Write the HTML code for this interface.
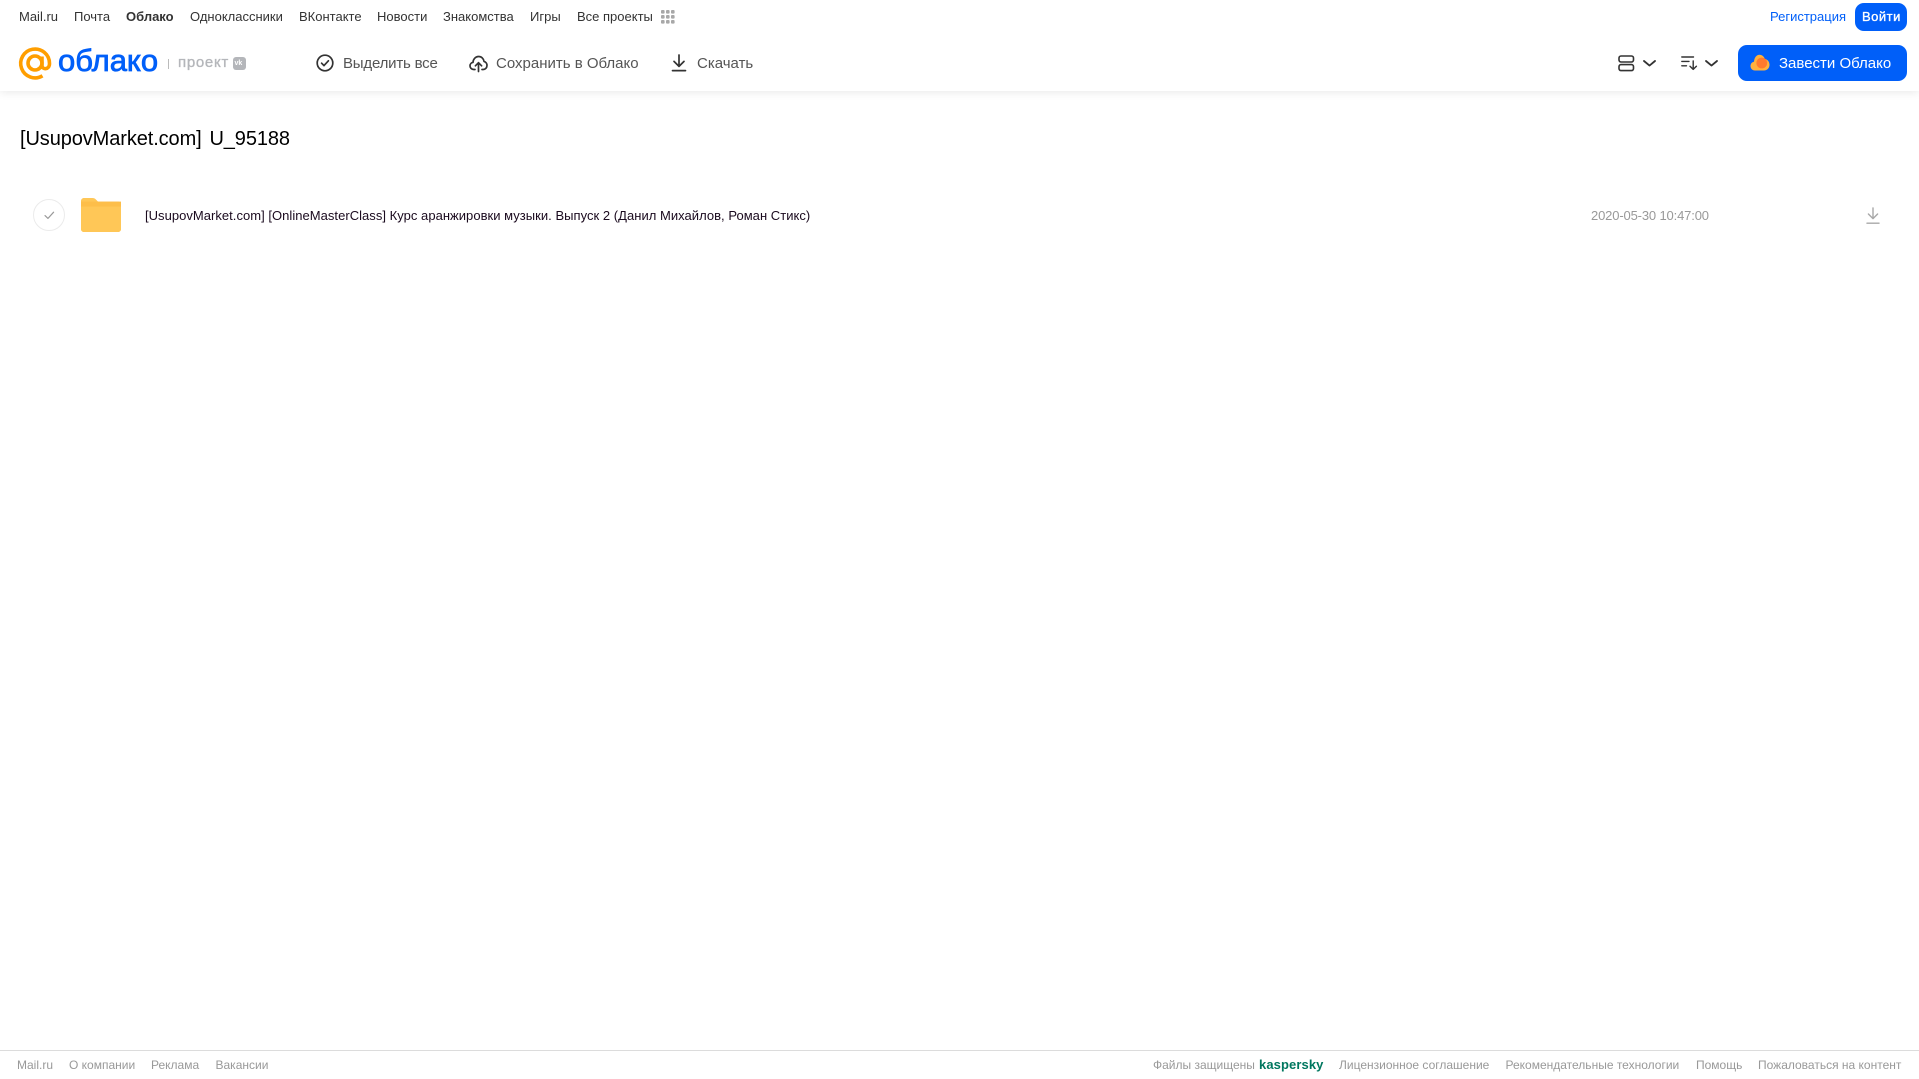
<!DOCTYPE html>
<html lang="ru">
<head>
<meta charset="utf-8">
<title>Облако</title>
<style>
html,body{margin:0;padding:0;background:#fff;width:1919px;height:1079px;overflow:hidden;font-family:"Liberation Sans",Arial,sans-serif}
#page{position:relative;width:1919px;height:1079px;overflow:hidden;background:#fff}
.t{position:absolute;white-space:nowrap;line-height:20px;height:20px}
.n{top:7px;font-size:13px;color:#333}
.a{top:54px;font-size:15px;color:#555;letter-spacing:0}
.f{top:1055px;font-size:12px;color:#999;letter-spacing:0}
svg{position:absolute;overflow:visible}
#head{position:absolute;left:0;top:0;width:1919px;height:91px;background:#fff;box-shadow:0 2px 8px rgba(0,0,0,.08)}
.btn{position:absolute;background:#005ff9;border-radius:9px}
</style>
</head>
<body>
<div id="page">
<div id="head"></div>

<span class="t n" style="left:19px">Mail.ru</span>
<span class="t n" style="left:74px">Почта</span>
<span class="t n" style="left:126px;font-weight:bold">Облако</span>
<span class="t n" style="left:190px">Одноклассники</span>
<span class="t n" style="left:299px">ВКонтакте</span>
<span class="t n" style="left:377px">Новости</span>
<span class="t n" style="left:443px">Знакомства</span>
<span class="t n" style="left:530px">Игры</span>
<span class="t n" style="left:577px">Все проекты</span>
<svg style="left:661px;top:10px" width="15" height="15" fill="#a8a8a8">
<rect x="0" y="0" width="3.6" height="3.6" rx="1"/><rect x="5" y="0" width="3.6" height="3.6" rx="1"/><rect x="10" y="0" width="3.6" height="3.6" rx="1"/>
<rect x="0" y="5" width="3.6" height="3.6" rx="1"/><rect x="5" y="5" width="3.6" height="3.6" rx="1"/><rect x="10" y="5" width="3.6" height="3.6" rx="1"/>
<rect x="0" y="10" width="3.6" height="3.6" rx="1"/><rect x="5" y="10" width="3.6" height="3.6" rx="1"/><rect x="10" y="10" width="3.6" height="3.6" rx="1"/>
</svg>

<span class="t n" style="left:1770px;color:#005ff9">Регистрация</span>
<div class="btn" style="left:1855px;top:3px;width:52px;height:28px"></div>
<span class="t n" style="left:1862px;color:#fff;-webkit-text-stroke:.35px #fff;letter-spacing:.5px">Войти</span>

<!-- logo -->
<svg style="left:19px;top:47px" width="33" height="33" viewBox="0 0 33 33" fill="none" stroke="#ff9e00" stroke-width="3.6">
<circle cx="16" cy="16" r="7"/>
<path d="M23 9.5V18.5C23 23 30.5 23 30.5 16.5A14.4 14.4 0 1 0 23.5 28.8"/>
</svg>
<span class="t" style="left:58px;top:41px;height:40px;line-height:40px;font-size:31px;color:#005ff9;-webkit-text-stroke:.8px #005ff9;letter-spacing:0">облако</span>
<div style="position:absolute;left:168px;top:59px;width:1px;height:10px;background:#bbb"></div>
<span class="t" style="left:178px;top:53px;font-size:15px;color:#b4b6ba;-webkit-text-stroke:.35px #b4b6ba;letter-spacing:.7px">проект</span>
<div style="position:absolute;left:233px;top:57px;width:13px;height:13px;background:#b4b6ba;border-radius:3px"></div>
<span class="t" style="left:234.5px;top:53.5px;font-size:7px;font-weight:bold;color:#fff">vk</span>

<!-- actions -->
<svg style="left:316px;top:54px" width="18" height="18" fill="none" stroke="#333" stroke-width="1.7" stroke-linecap="round" stroke-linejoin="round">
<circle cx="9" cy="9" r="7.8"/><path d="M5.6 9.2L8 11.6L12.4 6.8"/>
</svg>
<span class="t a" style="left:343px;letter-spacing:-.2px">Выделить все</span>
<svg style="left:469px;top:54px" width="19" height="18" fill="none" stroke="#333" stroke-width="1.7" stroke-linecap="round" stroke-linejoin="round">
<path d="M6 15.5H4.8C2.5 15.5 1 13.8 1 11.9C1 10 2.3 8.6 4 8.4C4.2 5 6.6 2.5 9.6 2.5C12.4 2.5 14.6 4.6 15 7.4C16.8 7.9 18 9.6 18 11.4C18 13.7 16.4 15.5 14.2 15.5H13"/>
<path d="M9.5 17.5V9M6.4 11.8L9.5 8.7L12.6 11.8"/>
</svg>
<span class="t a" style="left:496px">Сохранить в Облако</span>
<svg style="left:671px;top:54px" width="16" height="18" fill="none" stroke="#333" stroke-width="1.7" stroke-linecap="round" stroke-linejoin="round">
<path d="M8 1V12M3 7.4L8 12.4L13 7.4M1.5 16.6H14.5"/>
</svg>
<span class="t a" style="left:697px">Скачать</span>

<!-- view controls -->
<svg style="left:1618px;top:55px" width="17" height="17" fill="none" stroke="#333" stroke-width="1.6">
<rect x="1" y="1" width="14.5" height="6" rx="2"/><rect x="1" y="9.6" width="14.5" height="6" rx="2"/>
</svg>
<svg style="left:1643px;top:60px" width="13" height="7" fill="none" stroke="#333" stroke-width="1.8" stroke-linecap="round" stroke-linejoin="round">
<path d="M1 1L6.5 5.6L12 1"/>
</svg>
<svg style="left:1681px;top:56px" width="17" height="15" fill="none" stroke="#333" stroke-width="1.4" stroke-linecap="round" stroke-linejoin="round">
<path d="M.8 1H12.5M.8 5.4H8M.8 9.8H5.5M12.2 5V13.4M9 10.2L12.2 13.4L15.4 10.2"/>
</svg>
<svg style="left:1705px;top:60px" width="13" height="7" fill="none" stroke="#333" stroke-width="1.8" stroke-linecap="round" stroke-linejoin="round">
<path d="M1 1L6.5 5.6L12 1"/>
</svg>

<div class="btn" style="left:1738px;top:45px;width:169px;height:36px"></div>
<svg style="left:1750px;top:54px" width="20" height="17">
<path d="M5 16.5C2 16.5 .5 14.3 .5 12C.5 9.7 2 8 4 7.7C4.4 3.5 6.5 .8 9.5 .8C12.2 .8 14 2.6 14.8 5C17.6 5.4 19.5 7.8 19.5 10.8C19.5 14 17.3 16.5 14 16.5Z" fill="#ffb13d"/>
<circle cx="11.8" cy="9" r="5.4" fill="#ff7a2e"/>
</svg>
<span class="t a" style="left:1779px;color:#fff">Завести Облако</span>

<!-- title -->
<span class="t" style="left:20px;top:125px;height:28px;line-height:28px;font-size:20px;color:#000;letter-spacing:-.1px;word-spacing:2.4px">[UsupovMarket.com] U_95188</span>

<!-- row -->
<div style="position:absolute;left:33px;top:199px;width:30px;height:30px;border:1px solid #ebebeb;border-radius:50%"></div>
<svg style="left:44px;top:211px" width="11" height="9" fill="none" stroke="#999" stroke-width="1.2" stroke-linecap="round" stroke-linejoin="round">
<path d="M1 4.6L4 7.4L9.6 1.2"/>
</svg>
<svg style="left:81px;top:198px" width="40" height="34">
<path d="M0 3C0 1.3 1.3 0 3 0H11.5C13 0 14 .6 15 1.6L17 3.6H37C38.7 3.6 40 4.9 40 6.6V31C40 32.7 38.7 34 37 34H3C1.3 34 0 32.7 0 31Z" fill="#ffc757"/>
<rect x="0" y="3.6" width="40" height="5" fill="#fdbe4a"/>
<path d="M0 9H40V31C40 32.7 38.7 34 37 34H3C1.3 34 0 32.7 0 31Z" fill="#ffc757"/>
</svg>
<span class="t" style="left:145px;top:206px;font-size:13px;color:#1a0a1e;letter-spacing:.03px">[UsupovMarket.com] [OnlineMasterClass] Курс аранжировки музыки. Выпуск 2 (Данил Михайлов, Роман Стикс)</span>
<span class="t" style="left:1591px;top:206px;font-size:13px;color:#999;letter-spacing:-.15px">2020-05-30 10:47:00</span>
<svg style="left:1866px;top:207px" width="14" height="18" fill="none" stroke="#a8a8a8" stroke-width="1.4" stroke-linecap="round" stroke-linejoin="round">
<path d="M7 1V11.4M2.4 7L7 11.6L11.6 7M1 16.2H13"/>
</svg>

<!-- footer -->
<div style="position:absolute;left:0;top:1050px;width:1919px;height:1px;background:#dcdcdc"></div>
<span class="t f" style="left:17px">Mail.ru</span>
<span class="t f" style="left:69px">О компании</span>
<span class="t f" style="left:151px">Реклама</span>
<span class="t f" style="left:215.5px">Вакансии</span>
<span class="t f" style="left:1153px">Файлы защищены</span>
<span class="t" style="left:1259px;top:1055px;font-size:13px;font-weight:bold;color:#00775f;letter-spacing:.1px">kaspersky</span>
<span class="t f" style="left:1339px">Лицензионное соглашение</span>
<span class="t f" style="left:1505.5px">Рекомендательные технологии</span>
<span class="t f" style="left:1696px">Помощь</span>
<span class="t f" style="left:1758px">Пожаловаться на контент</span>
</div>
</body>
</html>
